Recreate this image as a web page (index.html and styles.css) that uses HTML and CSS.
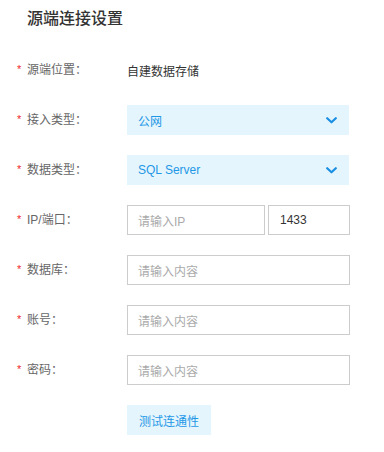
FILE: index.html
```html
<!DOCTYPE html>
<html lang="zh-CN">
<head>
<meta charset="utf-8">
<title>源端连接设置</title>
<link rel="stylesheet" href="styles.css">
</head>
<body>
<div class="page">
  <h1 class="title">源端连接设置</h1>
  <div class="form">
    <div class="row">
      <div class="label"><span class="req">*</span>源端位置：</div>
      <div class="value">自建数据存储</div>
    </div>
    <div class="row">
      <div class="label"><span class="req">*</span>接入类型：</div>
      <div class="select">
        <span>公网</span>
        <svg class="chev" width="11" height="7" viewBox="0 0 11 7"><path d="M1.2 1.2 L5.5 5.3 L9.8 1.2" fill="none" stroke="#1a8fe3" stroke-width="2.2" stroke-linecap="round" stroke-linejoin="round"/></svg>
      </div>
    </div>
    <div class="row">
      <div class="label"><span class="req">*</span>数据类型：</div>
      <div class="select">
        <span>SQL Server</span>
        <svg class="chev" width="11" height="7" viewBox="0 0 11 7"><path d="M1.2 1.2 L5.5 5.3 L9.8 1.2" fill="none" stroke="#1a8fe3" stroke-width="2.2" stroke-linecap="round" stroke-linejoin="round"/></svg>
      </div>
    </div>
    <div class="row">
      <div class="label"><span class="req">*</span>IP/端口：</div>
      <div class="pair">
        <div class="input ip placeholder">请输入IP</div>
        <div class="input port">1433</div>
      </div>
    </div>
    <div class="row">
      <div class="label"><span class="req">*</span>数据库：</div>
      <div class="input placeholder">请输入内容</div>
    </div>
    <div class="row">
      <div class="label"><span class="req">*</span>账号：</div>
      <div class="input placeholder">请输入内容</div>
    </div>
    <div class="row">
      <div class="label"><span class="req">*</span>密码：</div>
      <div class="input placeholder">请输入内容</div>
    </div>
    <div class="row">
      <div class="label"></div>
      <div class="btn">测试连通性</div>
    </div>
  </div>
</div>
</body>
</html>
```

FILE: styles.css
```css
html, body {
  margin: 0;
  padding: 0;
  background: #fff;
}
body {
  font-family: "Liberation Sans", "Noto Sans CJK SC", sans-serif;
  font-size: 12px;
  color: #333;
}
.page {
  width: 384px;
  height: 452px;
  overflow: hidden;
}
.title {
  margin: 7px 0 0 27px;
  font-size: 16px;
  line-height: 24px;
  font-weight: 500;
  color: #333;
}
.form {
  margin-top: 24px;
  display: flex;
  flex-direction: column;
  gap: 20px;
}
.row {
  display: flex;
  align-items: center;
  height: 30px;
  padding-left: 17px;
}
.label {
  width: 110px;
  flex: none;
  display: flex;
  align-items: center;
  color: #666;
  line-height: 30px;
}
.req {
  width: 10px;
  color: #f0262d;
  font-size: 11px;
  line-height: 1;
  position: relative;
  top: -1px;
}
.value {
  color: #333;
}
.select {
  width: 222px;
  height: 30px;
  box-sizing: border-box;
  background: #e5f5fd;
  color: #1e98e6;
  display: flex;
  align-items: center;
  justify-content: space-between;
  padding: 0 12px 0 11px;
}
.chev {
  display: block;
}
.pair {
  display: flex;
  gap: 3px;
}
.input {
  width: 223px;
  height: 30px;
  box-sizing: border-box;
  border: 1px solid #cccccc;
  display: flex;
  align-items: center;
  padding-left: 10px;
  color: #333;
}
.input.ip {
  width: 138px;
}
.input.port {
  width: 82px;
  padding-left: 11px;
}
.placeholder {
  color: #aaaaaa;
}
.btn {
  height: 30px;
  box-sizing: border-box;
  background: #e5f5fd;
  color: #1e98e6;
  display: flex;
  align-items: center;
  padding: 0 12px;
}
```
